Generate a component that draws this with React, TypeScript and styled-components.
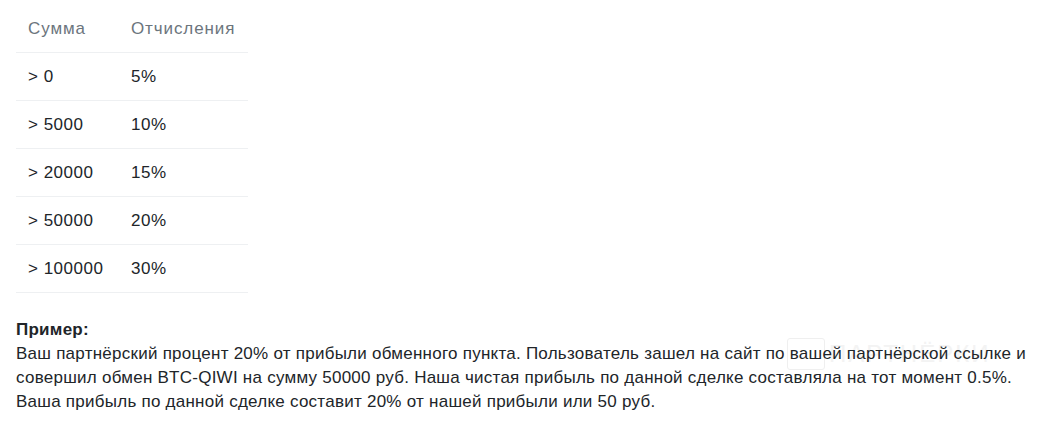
import * as React from 'react'
import styled, { createGlobalStyle } from 'styled-components'

const GlobalStyle = createGlobalStyle`
    body {
        margin: 0;
        background: #ffffff;
        font-family: 'Liberation Sans', Arial, sans-serif;
        font-size: 17px;
        line-height: 24px;
        color: #212529;
    }
`

const Page = styled.div`
    position: relative;
    z-index: 0;
    padding: 5px 8px 0 16px;
`

const RatesTable = styled.table`
    width: 232px;
    table-layout: fixed;
    border-collapse: collapse;
    margin-bottom: 25px;
    letter-spacing: 0.5px;
`

const HeadCell = styled.th<{ w: number }>`
    box-sizing: border-box;
    width: ${props => props.w}px;
    padding: 12px 12px 11px;
    text-align: left;
    font-weight: 400;
    letter-spacing: 0.9px;
    white-space: nowrap;
    color: #6c757d;
    border-bottom: 1px solid #eef0f2;
`

const Cell = styled.td`
    padding: 12px 12px 11px;
    border-bottom: 1px solid #eef0f2;
    white-space: nowrap;
`

const Example = styled.div`
    letter-spacing: 0.25px;
`

const ExampleTitle = styled.div`
    font-weight: 700;
`

// faint site watermark sitting behind the example text
const Watermark = styled.div`
    position: absolute;
    z-index: -1;
    left: 787px;
    top: 338px;
    display: flex;
    align-items: center;
    gap: 4px;
    pointer-events: none;
`

const MarkBox = styled.div`
    width: 36px;
    height: 30px;
    border: 1px solid #efefef;
    border-radius: 3px;
`

const MarkText = styled.span`
    font-size: 24px;
    letter-spacing: 2px;
    color: #f3f3f3;
`

const rows = [
    ['> 0', '5%'],
    ['> 5000', '10%'],
    ['> 20000', '15%'],
    ['> 50000', '20%'],
    ['> 100000', '30%'],
]

const App: React.FunctionComponent = () => {
    return (
        <Page>
            <GlobalStyle />
            <RatesTable>
                <thead>
                    <tr>
                        <HeadCell w={103}>Сумма</HeadCell>
                        <HeadCell w={129}>Отчисления</HeadCell>
                    </tr>
                </thead>
                <tbody>
                    {rows.map(row => (
                        <tr key={row[0]}>
                            <Cell>{row[0]}</Cell>
                            <Cell>{row[1]}</Cell>
                        </tr>
                    ))}
                </tbody>
            </RatesTable>
            <Watermark>
                <MarkBox />
                <MarkText>ПАРТНЁРКИ</MarkText>
            </Watermark>
            <Example>
                <ExampleTitle>Пример:</ExampleTitle>
                Ваш партнёрский процент 20% от прибыли обменного пункта.
                Пользователь зашел на сайт по вашей партнёрской ссылке и
                совершил обмен BTC-QIWI на сумму 50000 руб. Наша чистая
                прибыль по данной сделке составляла на тот момент 0.5%. Ваша
                прибыль по данной сделке составит 20% от нашей прибыли или 50
                руб.
            </Example>
        </Page>
    )
}

export default App
